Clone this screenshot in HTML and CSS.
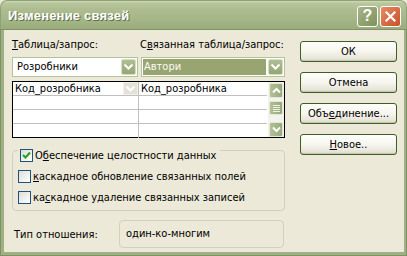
FILE: index.html
```html
<!DOCTYPE html>
<html lang="ru">
<head>
    <meta charset="UTF-8">
    <title>Изменение связей</title>
    <link rel="stylesheet" href="styles.css">
</head>
<body>
    <div class="window">
        <div class="titlebar">
            <span class="title">Изменение связей</span>
            <div class="caption-buttons">
                <span class="cap-btn cap-help">?</span>
                <span class="cap-btn cap-close">
                    <svg width="11" height="11" viewBox="0 0 11 11"><path d="M1.5 1.5 L9.5 9.5 M9.5 1.5 L1.5 9.5" stroke="#fff" stroke-width="2.2" stroke-linecap="square"/></svg>
                </span>
            </div>
        </div>

        <div class="frame">
            <div class="left">
                <div class="labels">
                    <span class="lbl-table"><u>Т</u>аблица/запрос:</span>
                    <span class="lbl-related">С<u>в</u>язанная таблица/запрос:</span>
                </div>

                <div class="combos">
                    <div class="combo combo-table">
                        <span class="combo-text">Розробники</span>
                        <span class="drop">
                            <svg width="11" height="8" viewBox="0 0 11 8"><path d="M1.5 1.5 L5.5 5.5 L9.5 1.5" fill="none" stroke="#fff" stroke-width="2"/></svg>
                        </span>
                    </div>
                    <div class="combo combo-related">
                        <span class="combo-text selected">Автори</span>
                        <span class="drop">
                            <svg width="11" height="8" viewBox="0 0 11 8"><path d="M1.5 1.5 L5.5 5.5 L9.5 1.5" fill="none" stroke="#fff" stroke-width="2"/></svg>
                        </span>
                    </div>
                </div>

                <div class="grid">
                    <div class="grid-rows">
                        <div class="grid-row">
                            <div class="cell cell-left">
                                <span>Код_розробника</span>
                                <span class="cell-drop">
                                    <svg width="11" height="8" viewBox="0 0 11 8"><path d="M1.5 1.5 L5.5 5.5 L9.5 1.5" fill="none" stroke="#fff" stroke-width="2"/></svg>
                                </span>
                            </div>
                            <div class="cell">Код_розробника</div>
                        </div>
                        <div class="grid-row">
                            <div class="cell cell-left"></div>
                            <div class="cell"></div>
                        </div>
                        <div class="grid-row">
                            <div class="cell cell-left"></div>
                            <div class="cell"></div>
                        </div>
                        <div class="grid-row">
                            <div class="cell cell-left"></div>
                            <div class="cell"></div>
                        </div>
                    </div>
                    <div class="scrollbar">
                        <span class="sb-btn">
                            <svg width="9" height="7" viewBox="0 0 9 7"><path d="M1 5.5 L4.5 2 L8 5.5" fill="none" stroke="#fff" stroke-width="2"/></svg>
                        </span>
                        <span class="sb-thumb">
                            <svg width="7" height="8" viewBox="0 0 7 8"><path d="M0 1.5 H7 M0 3.5 H7 M0 5.5 H7 M0 7.5 H7" stroke="#eef2e4" stroke-width="1"/></svg>
                        </span>
                        <span class="sb-track"></span>
                        <span class="sb-btn">
                            <svg width="9" height="7" viewBox="0 0 9 7"><path d="M1 1.5 L4.5 5 L8 1.5" fill="none" stroke="#fff" stroke-width="2"/></svg>
                        </span>
                    </div>
                </div>

                <div class="group">
                    <label class="check-row check-legend">
                        <span class="checkbox">
                            <svg width="11" height="11" viewBox="0 0 11 11"><path d="M2 5 L4.5 7.5 L9 2.5" fill="none" stroke="#21a121" stroke-width="2"/></svg>
                        </span>
                        <span>О<u>б</u>еспечение целостности данных</span>
                    </label>
                    <label class="check-row">
                        <span class="checkbox"></span>
                        <span><u>к</u>аскадное обновление связанных полей</span>
                    </label>
                    <label class="check-row">
                        <span class="checkbox"></span>
                        <span>ка<u>с</u>кадное удаление связанных записей</span>
                    </label>
                </div>

                <div class="reltype">
                    <span class="reltype-label">Тип отношения:</span>
                    <div class="reltype-box">один-ко-многим</div>
                </div>
            </div>

            <div class="buttons">
                <button class="btn">ОК</button>
                <button class="btn">Отмена</button>
                <button class="btn">Объ<u>е</u>динение...</button>
                <button class="btn"><u>Н</u>овое..</button>
            </div>
        </div>
    </div>
</body>
</html>
```

FILE: styles.css
```css
* {
    margin: 0;
    padding: 0;
    box-sizing: border-box;
}

body {
    font-family: 'DejaVu Sans Condensed', 'Liberation Sans', sans-serif;
    font-size: 11px;
    color: #000;
    background: #ece9d8;
}

u {
    text-decoration: underline;
    text-underline-offset: 1px;
}

.window {
    width: 407px;
    height: 256px;
    overflow: hidden;
    background: #ece9d8;
}

/* title bar */
.titlebar {
    height: 29px;
    display: flex;
    align-items: center;
    justify-content: space-between;
    padding: 0 5px 0 7px;
    border-radius: 7px 7px 0 0;
    background: linear-gradient(#d3ddb9 0, #b9c79d 2px, #aebd91 8px, #a5b688 18px, #99ab7b 29px);
    border: 1px solid #8ea277;
    border-bottom: none;
}

.title {
    font-family: 'Liberation Sans', Arial, sans-serif;
    font-weight: bold;
    font-size: 13px;
    letter-spacing: 0.2px;
    color: #fff;
    text-shadow: 1px 1px 0 #5f7046;
    padding-top: 1px;
}

.caption-buttons {
    display: flex;
    gap: 2px;
    margin-top: 2px;
}

.cap-btn {
    width: 21px;
    height: 21px;
    border: 1px solid #fff;
    border-radius: 3px;
    display: flex;
    align-items: center;
    justify-content: center;
}

.cap-help {
    background: linear-gradient(135deg, #a5b585, #7f925c);
    color: #fff;
    font-family: 'Liberation Sans', Arial, sans-serif;
    font-weight: bold;
    font-size: 16px;
}

.cap-close {
    background: linear-gradient(135deg, #e98a63, #c8502a);
}

/* window body */
.frame {
    height: 227px;
    display: flex;
    gap: 15px;
    padding: 9px 7px 0 8px;
    border: solid #9fb184;
    border-width: 0 3px 4px 4px;
    outline: 1px solid #7d9462;
    outline-offset: -1px;
}

.left {
    width: 273px;
    display: flex;
    flex-direction: column;
}

.labels {
    display: flex;
    height: 13px;
    line-height: 13px;
    white-space: nowrap;
}

.lbl-table {
    width: 128px;
}

/* combo boxes */
.combos {
    display: flex;
    gap: 3px;
    margin-top: 6px;
}

.combo {
    height: 20px;
    border: 1px solid #b3c39a;
    background: #fff;
    display: flex;
    align-items: center;
    padding: 1px;
}

.combo-table {
    width: 126px;
}

.combo-related {
    width: 144px;
}

.combo-text {
    flex: 1;
    height: 16px;
    line-height: 16px;
    padding-left: 3px;
}

.combo-text.selected {
    background: #98a571;
    color: #fbfbf3;
    margin-right: 2px;
    padding-left: 1px;
}

.drop {
    width: 15px;
    height: 16px;
    background: linear-gradient(#b0bf92, #93a673);
    border: 1px solid #d6dfc6;
    border-radius: 2px;
    display: flex;
    align-items: center;
    justify-content: center;
}

/* field grid */
.grid {
    margin-top: 4px;
    height: 57px;
    border: 1px solid #000;
    display: flex;
    background: #fff;
}

.grid-rows {
    flex: 1;
}

.grid-row {
    display: flex;
    height: 14px;
    border-bottom: 1px solid #c0c0c0;
}

.grid-row:last-child {
    border-bottom: none;
}

.cell {
    flex: 1;
    line-height: 13px;
    padding-left: 2px;
    white-space: nowrap;
}

.cell-left {
    flex: 0 0 126px;
    border-right: 1px solid #c0c0c0;
    display: flex;
    justify-content: space-between;
    padding-right: 0;
}

.cell-drop {
    width: 15px;
    height: 13px;
    background: #e4e2d8;
    border: 1px solid #f2f1ea;
    display: flex;
    align-items: center;
    justify-content: center;
}

.scrollbar {
    width: 17px;
    background: #f3f2ec;
    display: flex;
    flex-direction: column;
    padding: 1px 1px 0 1px;
    border-left: 1px solid #fff;
}

.sb-btn,
.sb-thumb {
    height: 15px;
    background: linear-gradient(90deg, #b2c196, #97a97a);
    border: 1px solid #e2e8d5;
    border-radius: 2px;
    display: flex;
    align-items: center;
    justify-content: center;
}

.sb-thumb {
    margin-top: 3px;
    height: 14px;
}

.sb-track {
    flex: 1;
}

/* group box */
.group {
    margin-top: 12px;
    height: 61px;
    border: 1px solid #d0d0bf;
    border-radius: 4px;
    padding: 0 0 0 5px;
    display: flex;
    flex-direction: column;
    gap: 8px;
}

.check-row {
    display: flex;
    align-items: center;
    gap: 2px;
    height: 13px;
    line-height: 13px;
    width: max-content;
}

.check-legend {
    margin-top: -2px;
    background: #ece9d8;
    padding: 0 4px 0 2px;
}

.checkbox {
    width: 13px;
    height: 13px;
    border: 1px solid #1c5180;
    background: linear-gradient(135deg, #dcdcd7, #fff);
    display: flex;
    align-items: center;
    justify-content: center;
}

/* relationship type */
.reltype {
    margin-top: 9px;
    display: flex;
    align-items: center;
}

.reltype-label {
    width: 107px;
    padding-left: 2px;
}

.reltype-box {
    width: 165px;
    height: 28px;
    border: 1px solid #d0d0bf;
    border-radius: 4px;
    line-height: 26px;
    padding-left: 6px;
}

/* buttons */
.buttons {
    width: 97px;
    display: flex;
    flex-direction: column;
    gap: 10px;
    margin-top: 3px;
}

.btn {
    height: 21px;
    font-family: inherit;
    font-size: 11px;
    color: #000;
    border: 1px solid #3d5e27;
    border-radius: 3px;
    background: linear-gradient(#fefefb 0, #f6f5ee 50%, #e8e6da 85%, #d9d5c6 100%);
    box-shadow: inset 0 -1px 0 #c9c6b4;
}
```
